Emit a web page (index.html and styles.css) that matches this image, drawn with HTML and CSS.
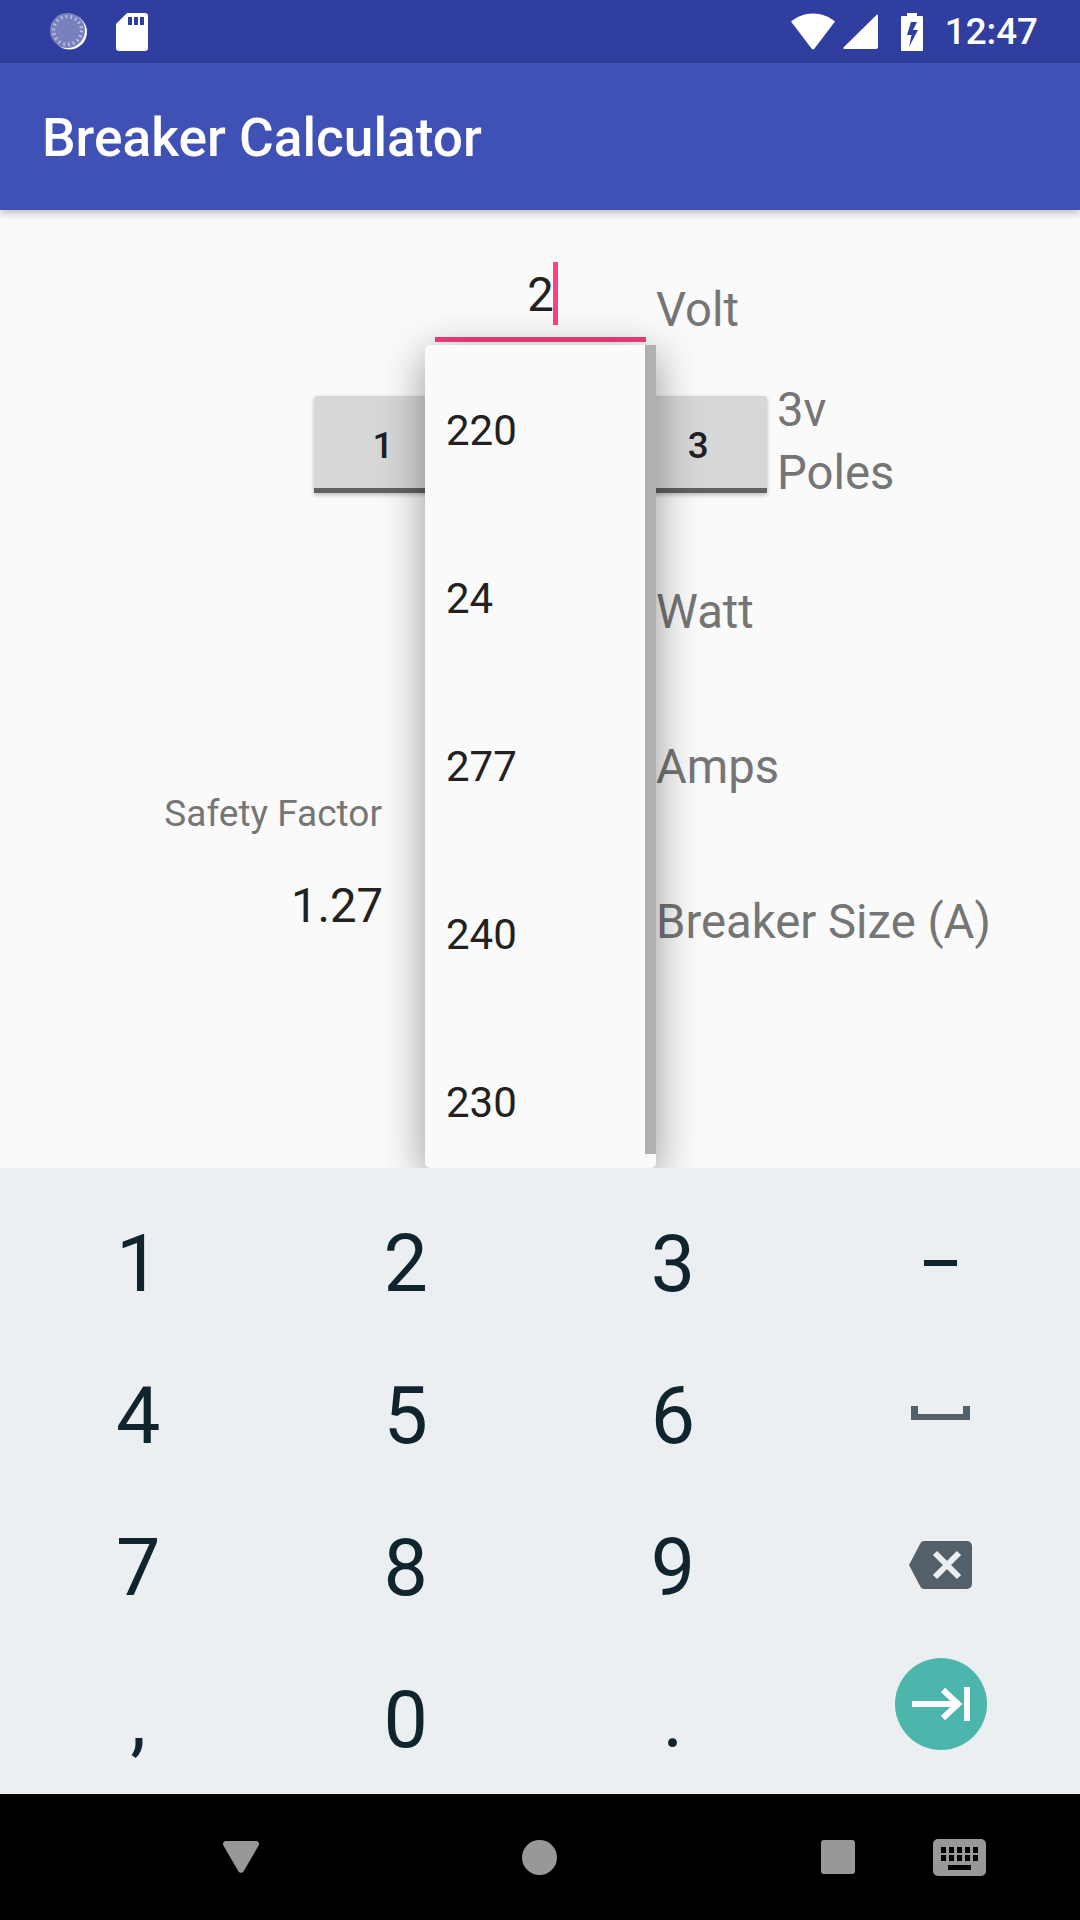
FILE: index.html
```html
<!DOCTYPE html>
<html lang="en">

<head>
  <meta charset="UTF-8">
  <meta name="viewport" content="width=device-width, initial-scale=1.0">
  <title>Breaker Calculator</title>

  <link rel="stylesheet" href="styles.css">
</head>

<body>
  <div class="screen">
    <div class="status-bar">
      <svg class="ic-sync" width="40" height="40" viewBox="0 0 40 40">
        <circle cx="19.5" cy="20" r="17.5" fill="#fff" />
        <circle cx="17.5" cy="18.5" r="17.5" fill="#7880bd" />
        <circle cx="17.5" cy="18.5" r="14" fill="none" stroke="#b9bddc" stroke-width="3.5" stroke-dasharray="1.8 3.09" />
      </svg>
      <svg class="ic-sd" width="32" height="38" viewBox="0 0 32 38">
        <path fill="#fff" d="M11 0H29a3 3 0 0 1 3 3V35a3 3 0 0 1-3 3H3a3 3 0 0 1-3-3V11z" />
        <path fill="#303f9f" d="M12 4h4v8h-4zM18 4h4v8h-4zM24 4h4v8h-4z" />
      </svg>
      <div class="status-right">
        <svg width="44" height="37" viewBox="0 0 44 37">
          <path fill="#fff" d="M0 8.500C6 3.500 13.500 0.500 22 0.500S38 3.500 44 8.500L23.500 35.500a2 2 0 0 1-3 0z" />
        </svg>
        <svg class="ic-signal" width="35" height="35" viewBox="0 0 35 35">
          <path fill="#fff" d="M34 0.500a1 1 0 0 1 1 1V33a2 2 0 0 1-2 2H1.500a1 1 0 0 1-.8-1.700z" />
        </svg>
        <svg class="ic-battery" width="22" height="38" viewBox="0 0 22 38">
          <path fill="#fff" d="M6 0h10v3h5a1 1 0 0 1 1 1V37a1 1 0 0 1-1 1H1a1 1 0 0 1-1-1V4a1 1 0 0 1 1-1h5z" />
          <path fill="#303f9f" d="M10 9 6 22h4.500L8 34 17 17h-5L16 9z" />
        </svg>
        <span class="clock">12:47</span>
      </div>
    </div>

    <div class="app-bar">Breaker Calculator</div>

    <div class="content">
      <div class="row row-volt">
        <div class="field">
          <div class="input-line"><span class="input-text">2<i class="caret"></i></span></div>
        </div>
        <div class="label">Volt</div>
      </div>

      <div class="row row-poles">
        <div class="field">
          <div class="poles">
            <div class="pole-btn">1</div>
            <div class="pole-btn">2</div>
            <div class="pole-btn">3</div>
          </div>
        </div>
        <div class="label poles-label">3v<br>Poles</div>
      </div>

      <div class="row row-watt">
        <div class="field"></div>
        <div class="label">Watt</div>
      </div>

      <div class="row row-amps">
        <div class="field safety-title">Safety Factor</div>
        <div class="label">Amps</div>
      </div>

      <div class="row row-breaker">
        <div class="field safety-value">1.27</div>
        <div class="label">Breaker Size (A)</div>
      </div>

      <div class="dropdown">
        <div class="dropdown-item">220</div>
        <div class="dropdown-item">24</div>
        <div class="dropdown-item">277</div>
        <div class="dropdown-item">240</div>
        <div class="dropdown-item">230</div>
        <div class="scrollbar"></div>
      </div>
    </div>

    <div class="keyboard">
      <div class="key">1</div>
      <div class="key">2</div>
      <div class="key">3</div>
      <div class="key"><span class="ic-minus"></span></div>
      <div class="key">4</div>
      <div class="key">5</div>
      <div class="key">6</div>
      <div class="key">
        <svg class="ic-space" width="59" height="14" viewBox="0 0 59 14">
          <path fill="#546069" d="M0 0h7v8h45V0h7v14H0z" />
        </svg>
      </div>
      <div class="key">7</div>
      <div class="key">8</div>
      <div class="key">9</div>
      <div class="key">
        <svg class="ic-back" width="63" height="48" viewBox="0 0 63 48">
          <path fill="#546069" d="M15 0H58a5 5 0 0 1 5 5V43a5 5 0 0 1-5 5H15a4 4 0 0 1-3.300-1.700L0 24 11.700 1.700A4 4 0 0 1 15 0z" />
          <path stroke="#eceff1" stroke-width="6" d="M26 12 50 36M50 12 26 36" />
        </svg>
      </div>
      <div class="key">,</div>
      <div class="key">0</div>
      <div class="key">.</div>
      <div class="key">
        <div class="next-btn">
          <svg width="58" height="34" viewBox="0 0 58 34">
            <path fill="none" stroke="#fff" stroke-width="6" d="M0 17H48M31 3 46 17 31 31M55 0V34" />
          </svg>
        </div>
      </div>
    </div>

    <div class="nav-bar">
      <svg class="nav-back" width="36" height="32" viewBox="0 0 36 32">
        <path fill="#989898" d="M3 0H33a3 3 0 0 1 2.600 4.500L20.500 30.500a3 3 0 0 1-5 0L.4 4.500A3 3 0 0 1 3 0z" />
      </svg>
      <svg class="nav-home" width="35" height="35" viewBox="0 0 35 35">
        <circle cx="17.500" cy="17.500" r="17.500" fill="#989898" />
      </svg>
      <svg class="nav-recent" width="34" height="34" viewBox="0 0 34 34">
        <rect width="34" height="34" rx="3" fill="#989898" />
      </svg>
      <svg class="nav-kbd" width="53" height="37" viewBox="0 0 53 37">
        <rect width="53" height="37" rx="5" fill="#989898" />
        <path fill="#000" d="M8 8h5v6H8zM16 8h5v6h-5zM24 8h5v6h-5zM32 8h5v6h-5zM40 8h5v6h-5zM8 16h5v6H8zM16 16h5v6h-5zM24 16h5v6h-5zM32 16h5v6h-5zM40 16h5v6h-5zM15 26h23v5H15z" />
      </svg>
    </div>
  </div>
</body>

</html>
```

FILE: styles.css
```css
* {
  box-sizing: border-box;
}

body {
  margin: 0;
  font-family: Roboto, "Liberation Sans", sans-serif;
}

.screen {
  display: flex;
  flex-direction: column;
  width: 1080px;
  height: 1920px;
  overflow: hidden;
  background-color: #FAFAFA;
}

/* status bar */
.status-bar {
  display: flex;
  align-items: center;
  height: 63px;
  padding: 0 42px 0 50px;
  background-color: #303F9F;
}

.ic-sd {
  margin-left: 26px;
}

.status-right {
  display: flex;
  align-items: center;
  margin-left: auto;
}

.ic-signal {
  margin-left: 8px;
}

.ic-battery {
  margin-left: 23px;
}

.clock {
  margin-left: 22px;
  color: #FFF;
  font-size: 36.75px;
  font-weight: 500;
}

/* app bar */
.app-bar {
  position: relative;
  z-index: 1;
  height: 147px;
  padding: 2px 0 0 42px;
  line-height: 147px;
  color: #FFF;
  font-size: 53.25px;
  font-weight: 500;
  background-color: #3F51B5;
  box-shadow: 0 3px 8px rgba(0, 0, 0, .25);
}

/* form */
.content {
  position: relative;
  flex: 1;
}

.row {
  display: flex;
}

.field {
  flex: none;
  width: 646px;
  text-align: right;
}

.label {
  margin: 18px 0 0 10px;
  color: #757575;
  font-size: 47.25px;
  line-height: 56px;
}

.row-volt {
  height: 186px;
}

.row-volt .label {
  margin-top: 72px;
}

.input-line {
  width: 211px;
  height: 132px;
  margin-left: 435px;
  padding-top: 56px;
  border-bottom: 5px solid #F43F7F;
  text-align: center;
}

.input-text {
  position: relative;
  color: #212121;
  font-size: 47.25px;
  line-height: 58px;
}

.caret {
  position: absolute;
  left: calc(100% - 1px);
  top: -5px;
  width: 5px;
  height: 63px;
  background-color: #FF4081;
}

.row-poles {
  height: 170px;
}

.poles {
  display: flex;
  gap: 20px;
  width: 453px;
  margin-left: 314px;
}

.pole-btn {
  width: 138px;
  height: 97px;
  border-bottom: 5px solid #616161;
  border-radius: 3px 3px 0 0;
  color: #212121;
  font-size: 36.75px;
  font-weight: 500;
  line-height: 100px;
  text-align: center;
  background-color: #D6D7D7;
  box-shadow: 0 2px 4px rgba(0, 0, 0, .25);
}

.poles-label {
  margin: -17px 0 0 131px;
  line-height: 63px;
}

.row-watt {
  height: 155px;
}

.row-amps {
  height: 155px;
}

.safety-title {
  padding: 71px 264px 0 0;
  color: #757575;
  font-size: 37px;
  line-height: 44px;
}

.row-breaker {
  height: 110px;
}

.safety-value {
  padding: 2px 263px 0 0;
  color: #212121;
  font-size: 47.25px;
  line-height: 56px;
}

/* suggestions popup */
.dropdown {
  position: absolute;
  left: 425px;
  top: 135px;
  width: 231px;
  height: 823px;
  overflow: hidden;
  border-radius: 5px 0 5px 5px;
  background-color: #FAFAFA;
  box-shadow: 0 10px 44px rgba(0, 0, 0, .4);
}

.dropdown-item {
  height: 168px;
  padding: 2px 0 0 21px;
  color: #212121;
  font-size: 42px;
  line-height: 168px;
}

.scrollbar {
  position: absolute;
  right: 0;
  top: 0;
  width: 11px;
  height: 809px;
  background-color: #B0B0B0;
}

/* keyboard */
.keyboard {
  position: relative;
  z-index: 2;
  display: grid;
  grid-template-columns: repeat(4, 267.4px);
  grid-auto-rows: 152px;
  height: 626px;
  padding: 20px 0 0 4.5px;
  background-color: #ECEFF1;
}

.key {
  display: flex;
  align-items: center;
  justify-content: center;
  color: #10242F;
  font-size: 79px;
}

.ic-minus {
  width: 33px;
  height: 6px;
  margin-top: -2px;
  background-color: #10242F;
}

.ic-space,
.ic-back {
  margin-top: -7px;
}

.next-btn {
  display: flex;
  align-items: center;
  justify-content: center;
  width: 92px;
  height: 92px;
  margin: -33px 0 0 2px;
  border-radius: 50%;
  background-color: #4DB6AC;
}

/* nav bar */
.nav-bar {
  position: relative;
  z-index: 2;
  display: flex;
  align-items: center;
  height: 126px;
  padding-left: 223px;
  background-color: #000;
}

.nav-home {
  margin-left: 263px;
}

.nav-recent {
  margin-left: 264px;
}

.nav-kbd {
  margin-left: 78px;
}
```
